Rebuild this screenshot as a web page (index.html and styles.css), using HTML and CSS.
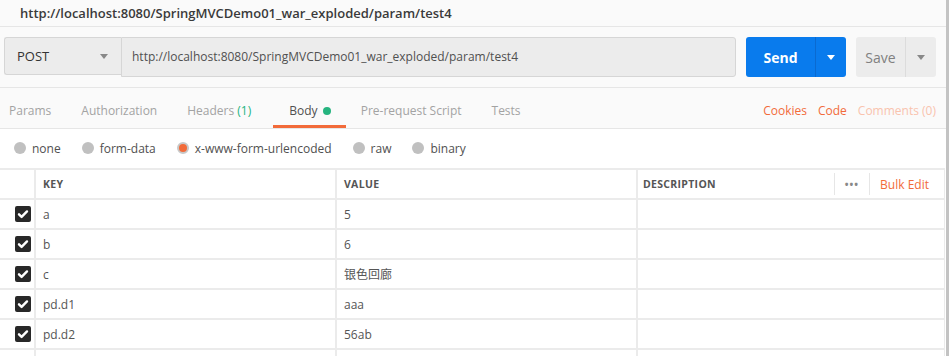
FILE: index.html
```html
<!DOCTYPE html>
<html lang="en">
<head>
  <meta charset="UTF-8">
  <title>Postman - param/test4</title>
  <link rel="stylesheet" href="styles.css">
</head>
<body>
  <div class="app">
    <div class="titlebar">http://localhost:8080/SpringMVCDemo01_war_exploded/param/test4</div>

    <div class="request">
      <div class="method">
        <span>POST</span>
        <span class="caret"></span>
      </div>
      <div class="url">http://localhost:8080/SpringMVCDemo01_war_exploded/param/test4</div>
      <div class="btn send">
        <span class="btn-label">Send</span>
        <span class="btn-drop"><span class="caret white"></span></span>
      </div>
      <div class="btn save">
        <span class="btn-label">Save</span>
        <span class="btn-drop"><span class="caret"></span></span>
      </div>
    </div>

    <div class="tabs">
      <div class="tab">Params</div>
      <div class="tab">Authorization</div>
      <div class="tab">Headers <span class="count">(1)</span></div>
      <div class="tab active">Body <span class="dot"></span></div>
      <div class="tab">Pre-request Script</div>
      <div class="tab">Tests</div>
      <div class="tab-links">
        <span class="link">Cookies</span>
        <span class="link">Code</span>
        <span class="link faded">Comments (0)</span>
      </div>
    </div>

    <div class="body-types">
      <label class="radio"><span class="circle"></span>none</label>
      <label class="radio"><span class="circle"></span>form-data</label>
      <label class="radio"><span class="circle checked"></span>x-www-form-urlencoded</label>
      <label class="radio"><span class="circle"></span>raw</label>
      <label class="radio"><span class="circle"></span>binary</label>
    </div>

    <div class="kv-table">
      <div class="row head">
        <div class="cell check"></div>
        <div class="cell">KEY</div>
        <div class="cell">VALUE</div>
        <div class="cell desc">
          <span>DESCRIPTION</span>
          <div class="head-tools">
            <span class="more">&bull;&bull;&bull;</span>
            <span class="bulk">Bulk Edit</span>
          </div>
        </div>
      </div>
      <div class="row">
        <div class="cell check"><span class="box"><svg viewBox="0 0 16 16"><path d="M4 8.3l2.6 2.6L12 5.4"/></svg></span></div>
        <div class="cell">a</div>
        <div class="cell">5</div>
        <div class="cell"></div>
      </div>
      <div class="row">
        <div class="cell check"><span class="box"><svg viewBox="0 0 16 16"><path d="M4 8.3l2.6 2.6L12 5.4"/></svg></span></div>
        <div class="cell">b</div>
        <div class="cell">6</div>
        <div class="cell"></div>
      </div>
      <div class="row">
        <div class="cell check"><span class="box"><svg viewBox="0 0 16 16"><path d="M4 8.3l2.6 2.6L12 5.4"/></svg></span></div>
        <div class="cell">c</div>
        <div class="cell">银色回廊</div>
        <div class="cell"></div>
      </div>
      <div class="row">
        <div class="cell check"><span class="box"><svg viewBox="0 0 16 16"><path d="M4 8.3l2.6 2.6L12 5.4"/></svg></span></div>
        <div class="cell">pd.d1</div>
        <div class="cell">aaa</div>
        <div class="cell"></div>
      </div>
      <div class="row">
        <div class="cell check"><span class="box"><svg viewBox="0 0 16 16"><path d="M4 8.3l2.6 2.6L12 5.4"/></svg></span></div>
        <div class="cell">pd.d2</div>
        <div class="cell">56ab</div>
        <div class="cell"></div>
      </div>
      <div class="row">
        <div class="cell check"></div>
        <div class="cell"></div>
        <div class="cell"></div>
        <div class="cell"></div>
      </div>
    </div>
  </div>
</body>
</html>
```

FILE: styles.css
```css
body {
  margin: 0;
  background: #fff;
  font-family: 'Open Sans', 'Noto Sans CJK SC', sans-serif;
  color: #505050;
  height: 356px;
  overflow: hidden;
}

.app {
  width: 946px;
  height: 356px;
  overflow: hidden;
  border-right: 3px solid #c3c3c3;
  background: #fff;
}

.titlebar {
  height: 26px;
  line-height: 26px;
  padding-left: 20px;
  font-size: 13px;
  font-weight: 600;
  color: #3a3a3a;
  background: #fafafa;
  border-bottom: 1px solid #e6e6e6;
}

.request {
  display: flex;
  padding: 10px 10px 10px 4px;
  background: #fafafa;
  border-bottom: 1px solid #e6e6e6;
}

.method {
  display: flex;
  align-items: center;
  justify-content: space-between;
  width: 117px;
  height: 38px;
  padding: 0 13px 0 12px;
  box-sizing: border-box;
  background: #ececec;
  border: 1px solid #d6d6d6;
  border-right: none;
  border-radius: 3px 0 0 3px;
  font-size: 13px;
  color: #333;
}

.url {
  flex: 1;
  height: 38px;
  line-height: 38px;
  padding-left: 10px;
  background: #ececec;
  border: 1px solid #d6d6d6;
  border-radius: 0 3px 3px 0;
  font-size: 12px;
  color: #505050;
}

.caret {
  width: 0;
  height: 0;
  border-left: 4px solid transparent;
  border-right: 4px solid transparent;
  border-top: 5px solid #888;
}

.caret.white {
  border-top-color: #fff;
}

.btn {
  display: flex;
  height: 40px;
  margin-left: 10px;
  border-radius: 3px;
}

.btn-label {
  display: flex;
  align-items: center;
  justify-content: center;
  font-size: 14px;
}

.btn-drop {
  display: flex;
  align-items: center;
  justify-content: center;
}

.send {
  width: 100px;
  background: #097bed;
  color: #fff;
}

.send .btn-label {
  width: 69px;
  font-weight: 700;
}

.send .btn-drop {
  width: 30px;
  border-left: 1px solid #0a6ad0;
}

.save {
  width: 80px;
  background: #ececec;
  color: #808080;
}

.save .btn-label {
  width: 49px;
}

.save .btn-drop {
  width: 30px;
  border-left: 1px solid #dcdcdc;
}

.tabs {
  display: flex;
  height: 41px;
  padding-left: 9px;
  padding-right: 10px;
  box-sizing: border-box;
  background: #fafafa;
  border-bottom: 1px solid #e6e6e6;
}

.tab {
  position: relative;
  margin-right: 30px;
  padding-top: 14px;
  line-height: 18px;
  font-size: 12px;
  color: #a3a3a3;
}

.tab .count {
  color: #26b47f;
}

.tab.active {
  margin-left: 8px;
  color: #505050;
}

.tab.active::after {
  content: '';
  position: absolute;
  left: -16px;
  right: -15px;
  bottom: 0;
  height: 3px;
  background: #f26b3a;
}

.dot {
  display: inline-block;
  width: 8px;
  height: 8px;
  margin-left: 2px;
  border-radius: 50%;
  background: #26b47f;
}

.tab-links {
  margin-left: auto;
  display: flex;
  gap: 11px;
  padding-top: 14px;
  line-height: 18px;
  font-size: 12px;
}

.link {
  color: #f26b3a;
}

.link.faded {
  color: #f9c3ae;
}

.body-types {
  display: flex;
  align-items: center;
  height: 38px;
  padding-left: 14px;
  padding-top: 1px;
  font-size: 12px;
  color: #505050;
}

.radio {
  display: flex;
  align-items: center;
  margin-right: 21px;
  line-height: 16px;
}

.circle {
  width: 12px;
  height: 12px;
  margin-right: 6px;
  margin-top: -3px;
  border-radius: 50%;
  background: #c0c0c0;
  box-sizing: border-box;
}

.circle.checked {
  background: #f26b3a;
  border: 2px solid #c8c8c8;
}

.kv-table {
  border-top: 2px solid #ebebeb;
  margin-right: 1px;
}

.row {
  display: grid;
  grid-template-columns: 34px 301px 301px 1fr;
  height: 30px;
  border-bottom: 2px solid #ebebeb;
  box-sizing: border-box;
  font-size: 12px;
}

.cell {
  display: flex;
  align-items: center;
  padding-left: 7px;
  border-left: 2px solid #ebebeb;
  color: #555;
}

.cell.check {
  border-left: none;
  padding-left: 15px;
}

.row .cell:last-child {
  border-right: 1px solid #ebebeb;
}

.row.head .cell {
  font-size: 10.5px;
  font-weight: 700;
  letter-spacing: 0.3px;
  color: #555;
}

.cell.desc {
  padding-left: 5px;
  justify-content: space-between;
}

.head-tools {
  display: flex;
  align-items: center;
  height: 22px;
}

.more {
  height: 22px;
  line-height: 22px;
  padding: 0 10px;
  border-left: 1px solid #e6e6e6;
  border-right: 1px solid #e6e6e6;
  color: #888;
  font-size: 10px;
  letter-spacing: 1px;
}

.row.head .bulk {
  padding: 0 15px 0 10px;
  color: #f26b3a;
  font-size: 12px;
  font-weight: 400;
  letter-spacing: 0;
}

.box {
  width: 16px;
  height: 16px;
  border-radius: 2px;
  background: #282828;
}

.box svg {
  display: block;
  width: 16px;
  height: 16px;
  fill: none;
  stroke: #fff;
  stroke-width: 2.4;
  stroke-linecap: round;
  stroke-linejoin: round;
}
```
